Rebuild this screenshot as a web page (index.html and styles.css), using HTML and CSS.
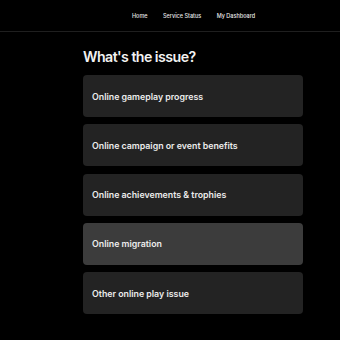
FILE: index.html
```html
<!DOCTYPE html>
<html lang="en">
<head>
<meta charset="utf-8">
<title>What's the issue?</title>
<link rel="stylesheet" href="styles.css">
</head>
<body>
<header class="topbar">
  <nav class="nav">
    <a class="nav-link" href="#">Home</a>
    <a class="nav-link" href="#">Service Status</a>
    <a class="nav-link" href="#">My Dashboard</a>
  </nav>
</header>
<main class="content">
  <h1 class="title">What's the issue?</h1>
  <ul class="options">
    <li class="option">Online gameplay progress</li>
    <li class="option">Online campaign or event benefits</li>
    <li class="option">Online achievements &amp; trophies</li>
    <li class="option option-active">Online migration</li>
    <li class="option">Other online play issue</li>
  </ul>
</main>
</body>
</html>
```
FILE: styles.css
```css
* { box-sizing: border-box; }
html, body {
  margin: 0;
  padding: 0;
  background: #000;
  color: #f2f2f2;
  font-family: Inter, "Liberation Sans", sans-serif;
}
.topbar {
  height: 32px;
  border-bottom: 1px solid #1f1f1f;
  display: flex;
  align-items: center;
  padding-left: 132px;
}
.nav {
  display: flex;
  gap: 15.5px;
  padding-top: 1px;
}
.nav-link {
  color: #e8e8e8;
  text-decoration: none;
  font-size: 5.5px;
  font-weight: 500;
}
.content {
  width: 220px;
  margin: 0 auto;
  padding-top: 15px;
  position: relative;
  left: 23px;
}
.title {
  margin: 0 0 8px;
  font-size: 14.2px;
  font-weight: 600;
  line-height: 20px;
  letter-spacing: -0.55px;
}
.options {
  list-style: none;
  margin: 0;
  padding: 0;
  display: flex;
  flex-direction: column;
  gap: 7.3px;
}
.option {
  height: 42px;
  border-radius: 4px;
  background: #232323;
  display: flex;
  align-items: center;
  padding-left: 9px;
  font-size: 8.8px;
  font-weight: 600;
  color: #ececec;
}
.option-active {
  background: #3c3c3c;
}
```
